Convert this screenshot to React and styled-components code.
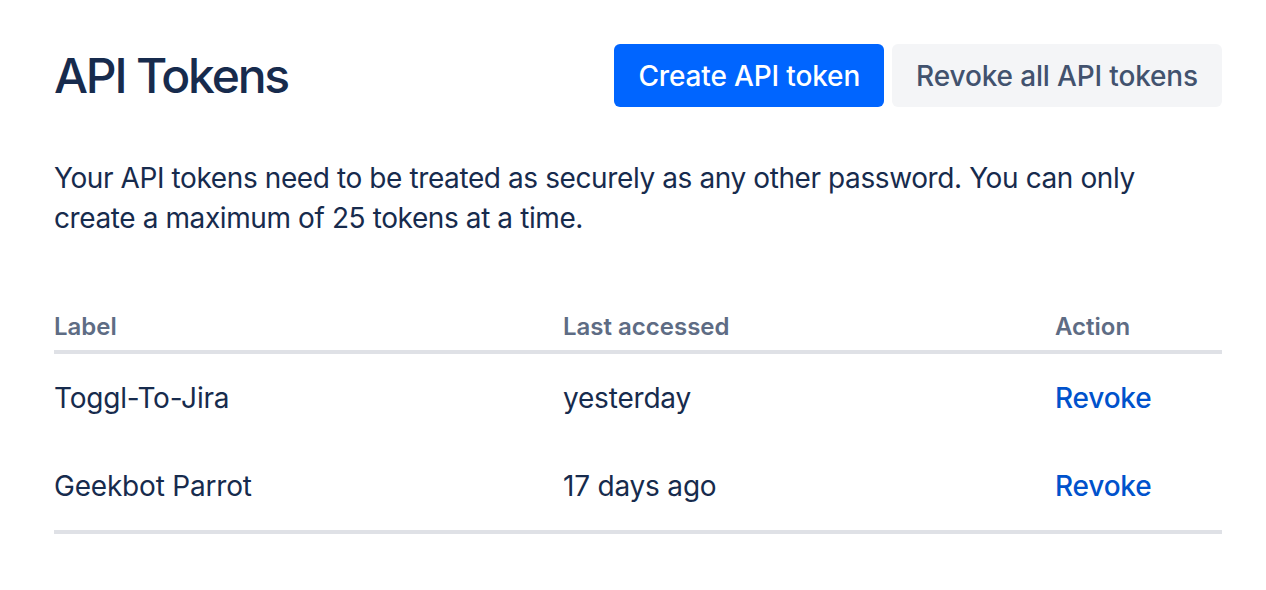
import React from "react";
import styled, { createGlobalStyle } from "styled-components";

const tokens = [
    { id: 1, label: "Toggl-To-Jira", accessed: "yesterday" },
    { id: 2, label: "Geekbot Parrot", accessed: "17 days ago" },
];

const GlobalStyle = createGlobalStyle`
    body {
        margin: 0;
        background: #ffffff;
        font-family: Inter, "Noto Sans", "Liberation Sans", sans-serif;
        color: #172b4d;
    }
`;

const App = () => {
    return (
        <>
            <GlobalStyle />
            <Page>
                <Header>
                    <Title>API Tokens</Title>
                    <Actions>
                        <Button $primary>Create API token</Button>
                        <Button>Revoke all API tokens</Button>
                    </Actions>
                </Header>
                <Description>
                    Your API tokens need to be treated as securely as any other password. You can only create a maximum of 25 tokens at a time.
                </Description>
                <Table>
                    <HeadRow>
                        <HeadCell>Label</HeadCell>
                        <HeadCell>Last accessed</HeadCell>
                        <HeadCell>Action</HeadCell>
                    </HeadRow>
                    {tokens.map(token => {
                        return (
                            <Row key={token.id}>
                                <Cell>{token.label}</Cell>
                                <Cell>{token.accessed}</Cell>
                                <Cell>
                                    <RevokeLink href="#">Revoke</RevokeLink>
                                </Cell>
                            </Row>
                        )
                    })}
                </Table>
            </Page>
        </>
    )
}

export default App;

const Page = styled.div`
    padding: 44px 44px 0 54px;
`

const Header = styled.div`
    display: flex;
    flex-flow: row nowrap;
    justify-content: space-between;
    align-items: center;
    height: 63px;
`

const Title = styled.h1`
    margin: 0;
    font-size: 48px;
    line-height: 56px;
    font-weight: 500;
    letter-spacing: -2.2px;
    color: #172b4d;
`

const Actions = styled.div`
    display: flex;
    gap: 8px;
`

const Button = styled.button`
    height: 63px;
    padding: 0 24px;
    border: none;
    border-radius: 6px;
    font-family: inherit;
    font-size: 28px;
    font-weight: 500;
    letter-spacing: -0.15px;
    background: ${props => props.$primary ? "#0065ff" : "#f4f5f7"};
    color: ${props => props.$primary ? "#ffffff" : "#42526e"};
    cursor: pointer;
`

const Description = styled.p`
    margin: 51px 0 0;
    max-width: 1110px;
    font-size: 28px;
    line-height: 40px;
    letter-spacing: -0.4px;
    color: #172b4d;
`

const Table = styled.div`
    margin-top: 64px;
    border-bottom: 4px solid #dfe1e6;
`

const HeadRow = styled.div`
    display: grid;
    grid-template-columns: 509px 492px 1fr;
    align-items: center;
    height: 48px;
    border-bottom: 4px solid #dfe1e6;
`

const HeadCell = styled.div`
    font-size: 24px;
    font-weight: 600;
    color: #5e6c84;
`

const Row = styled.div`
    display: grid;
    grid-template-columns: 509px 492px 1fr;
    align-items: center;
    height: 88px;
`

const Cell = styled.div`
    font-size: 28px;
    letter-spacing: -0.2px;
    color: #172b4d;
`

const RevokeLink = styled.a`
    color: #0052cc;
    font-weight: 500;
    text-decoration: none;
`
